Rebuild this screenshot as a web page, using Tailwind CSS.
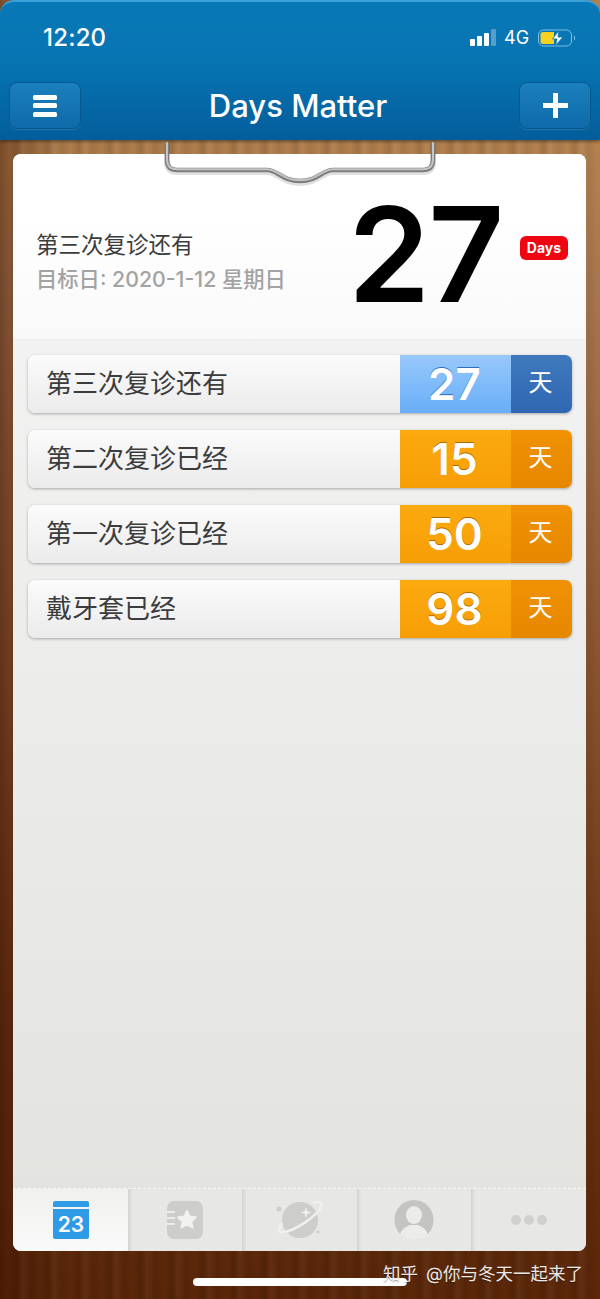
<!DOCTYPE html>
<html lang="zh">
<head>
<meta charset="utf-8">
<script src="https://cdn.jsdelivr.net/npm/@tailwindcss/browser@4"></script>
</head>
<body class="m-0 bg-black">
<div class="relative w-[600px] h-[1299px] overflow-hidden font-['Inter','Noto_Sans_CJK_SC',sans-serif]">
  <!-- wood -->
  <div class="absolute inset-0 bg-[linear-gradient(180deg,#b5834f_11%,#a87850_22%,#8c5630_50%,#6a3414_78%,#5c2708_100%)]"></div>
  <div class="absolute inset-0 bg-[linear-gradient(90deg,rgba(60,15,0,0.42)_0%,rgba(60,15,0,0.32)_2.500%,rgba(60,15,0,0.05)_10%,rgba(60,15,0,0)_100%)]"></div>
  <div class="absolute inset-0 bg-[repeating-linear-gradient(90deg,rgba(0,0,0,0.08)_0px,rgba(0,0,0,0)_9px,rgba(0,0,0,0.12)_17px,rgba(255,255,255,0.03)_23px,rgba(0,0,0,0.08)_31px)]"></div>

  <div class="relative flex flex-col h-full">
    <!-- header -->
    <header class="h-[140px] shrink-0 rounded-t-[14px] border-t-2 border-[#3aa0d6] bg-[linear-gradient(180deg,#0879b6_0%,#0774b2_45%,#045d9b_100%)] flex flex-col pl-[9px] pr-[9px] shadow-[0_2px_3px_rgba(0,0,0,0.35)]">
      <div class="h-[78px] shrink-0 flex items-center justify-between pl-[34px] pr-[15px] pb-[7px] text-white">
        <span class="text-[24px] font-medium leading-none tracking-[0.2px]">12:20</span>
        <div class="flex items-center gap-[8px]">
          <div class="flex items-end gap-[2px] h-[17px]">
            <i class="block w-[5px] h-[7px] bg-white rounded-[1px]"></i>
            <i class="block w-[5px] h-[10px] bg-white rounded-[1px]"></i>
            <i class="block w-[5px] h-[13px] bg-white rounded-[1px]"></i>
            <i class="block w-[5px] h-[17px] bg-white/30 rounded-[1px]"></i>
          </div>
          <span class="text-[18px] leading-none w-[26px]">4G</span>
          <svg width="38" height="18" viewBox="0 0 38 18" class="block">
            <rect x="0.500" y="1" width="33" height="16" rx="5" fill="none" stroke="#7cc0e6" stroke-width="1"/>
            <path d="M36 6.500c1.500.5 1.500 4.500 0 5z" fill="#7cc0e6"/>
            <path d="M5 3h11v12H5a2.500 2.500 0 0 1-2.500-2.500v-7A2.500 2.500 0 0 1 5 3z" fill="#f6d21f"/>
            <path d="M21 1.500 14.500 10h4.500l-1.500 6.500L25 8h-5z" fill="#fff" stroke="#0a74b0" stroke-width="0.800"/>
          </svg>
        </div>
      </div>
      <div class="flex items-start justify-between h-[50px] pt-[2px]">
        <div class="w-[72px] h-[47px] rounded-[8px] bg-[linear-gradient(180deg,#1b80bc,#0f6aa9)] border border-[#05578f] shadow-[0_1px_0_rgba(255,255,255,0.12)] flex flex-col items-center justify-center gap-[3.500px]">
          <i class="block w-[24px] h-[5px] rounded-[1.500px] bg-white"></i>
          <i class="block w-[24px] h-[5px] rounded-[1.500px] bg-white"></i>
          <i class="block w-[24px] h-[5px] rounded-[1.500px] bg-white"></i>
        </div>
        <h1 class="text-[31px] leading-[48px] font-medium text-white m-0 mr-[4px]">Days Matter</h1>
        <div class="w-[72px] h-[47px] rounded-[8px] bg-[linear-gradient(180deg,#1b80bc,#0f6aa9)] border border-[#05578f] shadow-[0_1px_0_rgba(255,255,255,0.12)] flex items-center justify-center">
          <svg width="25" height="25" viewBox="0 0 25 25" class="block"><path d="M10 0h5v10h10v5H15v10h-5V15H0v-5h10z" fill="#fff"/></svg>
        </div>
      </div>
    </header>

    <!-- card -->
    <main class="mt-[14px] ml-[13px] w-[573px] h-[1097px] rounded-[8px] overflow-hidden flex flex-col bg-[linear-gradient(180deg,#f5f5f5_0%,#e2e2df_100%)]">
      <section class="h-[186px] shrink-0 flex items-center bg-[linear-gradient(180deg,#ffffff_0%,#ffffff_35%,#f9f9f9_100%)] border-b border-[#f0f0f0] pl-[23px]">
        <div class="w-[312px] shrink-0 pt-[30px]">
          <p class="m-0 text-[22.500px] leading-[34px] text-[#3c3c3c]">第三次复诊还有</p>
          <p class="m-0 text-[21.300px] leading-[34px] font-medium text-[#a3a3a3]">目标日: 2020-1-12 星期日</p>
        </div>
        <div class="w-[150px] shrink-0 text-[132px] leading-none font-semibold text-black tracking-[-2px] text-center pt-[15px]">27</div>
        <div class="ml-[22px] w-[48px] h-[24px] rounded-[6px] bg-[#ee0612] text-white text-[14px] font-bold flex items-center justify-center mt-[2px]">Days</div>
      </section>

      <div class="flex-1 flex flex-col gap-[17px] pl-[15px] pr-[14px] pt-[15px]">
        <div class="h-[58px] rounded-[7px] overflow-hidden flex shadow-[0_1px_3px_rgba(0,0,0,0.3)]">
          <div class="w-[372px] flex items-center pl-[18px] pb-[2px] text-[26px] text-[#3c3c3c] bg-[linear-gradient(180deg,#fbfbfb,#ebebeb)]">第三次复诊还有</div>
          <div class="w-[111px] flex items-center justify-center pr-[2px] text-[44px] font-semibold text-white bg-[linear-gradient(180deg,#98c8fb,#68aef7)] [text-shadow:0_-1px_0_#2a6fc0]">27</div>
          <div class="w-[61px] flex items-center justify-center pb-[2px] pr-[2px] text-[24px] text-white bg-[linear-gradient(180deg,#3f79bd,#2f67b2)]">天</div>
        </div>
        <div class="h-[58px] rounded-[7px] overflow-hidden flex shadow-[0_1px_3px_rgba(0,0,0,0.3)]">
          <div class="w-[372px] flex items-center pl-[18px] pb-[2px] text-[26px] text-[#3c3c3c] bg-[linear-gradient(180deg,#fbfbfb,#ebebeb)]">第二次复诊已经</div>
          <div class="w-[111px] flex items-center justify-center pr-[2px] text-[44px] font-semibold text-white bg-[linear-gradient(180deg,#fbaa10,#f79e05)] [text-shadow:0_-1px_0_#b06a00]">15</div>
          <div class="w-[61px] flex items-center justify-center pb-[2px] pr-[2px] text-[24px] text-white bg-[linear-gradient(180deg,#f09203,#e68700)]">天</div>
        </div>
        <div class="h-[58px] rounded-[7px] overflow-hidden flex shadow-[0_1px_3px_rgba(0,0,0,0.3)]">
          <div class="w-[372px] flex items-center pl-[18px] pb-[2px] text-[26px] text-[#3c3c3c] bg-[linear-gradient(180deg,#fbfbfb,#ebebeb)]">第一次复诊已经</div>
          <div class="w-[111px] flex items-center justify-center pr-[2px] text-[44px] font-semibold text-white bg-[linear-gradient(180deg,#fbaa10,#f79e05)] [text-shadow:0_-1px_0_#b06a00]">50</div>
          <div class="w-[61px] flex items-center justify-center pb-[2px] pr-[2px] text-[24px] text-white bg-[linear-gradient(180deg,#f09203,#e68700)]">天</div>
        </div>
        <div class="h-[58px] rounded-[7px] overflow-hidden flex shadow-[0_1px_3px_rgba(0,0,0,0.3)]">
          <div class="w-[372px] flex items-center pl-[18px] pb-[2px] text-[26px] text-[#3c3c3c] bg-[linear-gradient(180deg,#fbfbfb,#ebebeb)]">戴牙套已经</div>
          <div class="w-[111px] flex items-center justify-center pr-[2px] text-[44px] font-semibold text-white bg-[linear-gradient(180deg,#fbaa10,#f79e05)] [text-shadow:0_-1px_0_#b06a00]">98</div>
          <div class="w-[61px] flex items-center justify-center pb-[2px] pr-[2px] text-[24px] text-white bg-[linear-gradient(180deg,#f09203,#e68700)]">天</div>
        </div>
      </div>

      <!-- tabs -->
      <nav class="h-[63px] shrink-0 flex border-t border-dashed border-[#f6f6f4]">
        <div class="w-[115px] flex items-center justify-center bg-[linear-gradient(180deg,#f0f0ee,#fafafa)]">
          <svg width="36" height="38" viewBox="0 0 36 38" class="block">
            <path d="M0 2a2 2 0 0 1 2-2h32a2 2 0 0 1 2 2v4H0z" fill="#2f9be6"/>
            <path d="M0 8h36v28a2 2 0 0 1-2 2H2a2 2 0 0 1-2-2z" fill="#2f9be6"/>
            <text x="18" y="31" text-anchor="middle" font-size="21" font-weight="600" fill="#fff" font-family="Inter">23</text>
          </svg>
        </div>
        <div class="w-[114px] flex items-center justify-center bg-[#e7e7e5] shadow-[inset_4px_0_4px_-3px_rgba(0,0,0,0.14)]">
          <svg width="36" height="40" viewBox="0 0 36 40" class="block">
            <rect x="0" y="1" width="36" height="38" rx="7" fill="#cdcdcb"/>
            <path d="M0 12h8M0 18h8M0 24h8" stroke="#ececea" stroke-width="2"/>
            <path d="M20 11l2.600 5.600 6.200.7-4.600 4.100 1.300 6-5.500-3-5.500 3 1.300-6-4.600-4.100 6.200-.7z" fill="#f2f2f0" stroke="#f2f2f0" stroke-width="2" stroke-linejoin="round"/>
          </svg>
        </div>
        <div class="w-[115px] flex items-center justify-center bg-[#e7e7e5] shadow-[inset_4px_0_4px_-3px_rgba(0,0,0,0.14)]">
          <svg width="48" height="40" viewBox="0 0 48 40" class="block">
            <circle cx="3" cy="9" r="2.500" fill="#cdcdcb"/>
            <circle cx="42" cy="32" r="1.500" fill="#cdcdcb"/>
            <circle cx="24" cy="20" r="18" fill="#cdcdcb"/>
            <path d="M6 24C1 30 2 33 8 32c10-1 32-15 37-25 2-5-2-6-7-4" fill="none" stroke="#f0f0ee" stroke-width="2.500" stroke-linecap="round"/>
            <path d="M30 7l1.200 4.300L35.500 12.500l-4.300 1.200L30 18l-1.200-4.300-4.300-1.200 4.300-1.200z" fill="#f2f2f0"/>
          </svg>
        </div>
        <div class="w-[114px] flex items-center justify-center bg-[#e7e7e5] shadow-[inset_4px_0_4px_-3px_rgba(0,0,0,0.14)]">
          <svg width="40" height="40" viewBox="0 0 40 40" class="block">
            <ellipse cx="20" cy="20" rx="19.500" ry="20" fill="#c4c4c2"/>
            <ellipse cx="20" cy="15" rx="8" ry="9" fill="#ececea"/>
            <path d="M6 35c1-6 6-8 10-10h8c4 2 9 4 10 10-4 3-9 5-14 5s-10-2-14-5z" fill="#ececea"/>
          </svg>
        </div>
        <div class="flex-1 flex items-center justify-center gap-[3px] bg-[#e7e7e5] shadow-[inset_4px_0_4px_-3px_rgba(0,0,0,0.14)]">
          <i class="block w-[10px] h-[10px] rounded-full bg-[#d0d0ce]"></i>
          <i class="block w-[10px] h-[10px] rounded-full bg-[#d0d0ce]"></i>
          <i class="block w-[10px] h-[10px] rounded-full bg-[#d0d0ce]"></i>
        </div>
      </nav>
    </main>
  </div>

  <!-- clip -->
  <svg class="absolute left-[160px] top-[140px]" width="280" height="48" viewBox="0 0 280 48" fill="none">
    <path d="M7 3V20Q7 30 17 30H107C118 30 122 41 140 41C158 41 162 30 173 30H263Q273 30 273 20V3" stroke="#000" stroke-opacity="0.12" stroke-width="6" transform="translate(0 2)"/>
    <path d="M7 3V20Q7 30 17 30H107C118 30 122 41 140 41C158 41 162 30 173 30H263Q273 30 273 20V3" stroke="#7d7d7d" stroke-width="4.500"/>
    <path d="M7 3V20Q7 30 17 30H107C118 30 122 41 140 41C158 41 162 30 173 30H263Q273 30 273 20V3" stroke="#c4c4c4" stroke-width="2" transform="translate(0 -0.800)"/>
  </svg>

  <!-- home bar -->
  <div class="absolute left-[193px] top-[1278px] w-[214px] h-[8px] rounded-full bg-white"></div>
  <!-- watermark -->
  <div class="absolute right-[17px] top-[1262px] flex gap-[8px] text-[17.500px] leading-[24px] text-white/90 whitespace-nowrap [text-shadow:0_1px_1px_rgba(0,0,0,0.4)]"><span>知乎</span><span>@你与冬天一起来了</span></div>
</div>
</body>
</html>
